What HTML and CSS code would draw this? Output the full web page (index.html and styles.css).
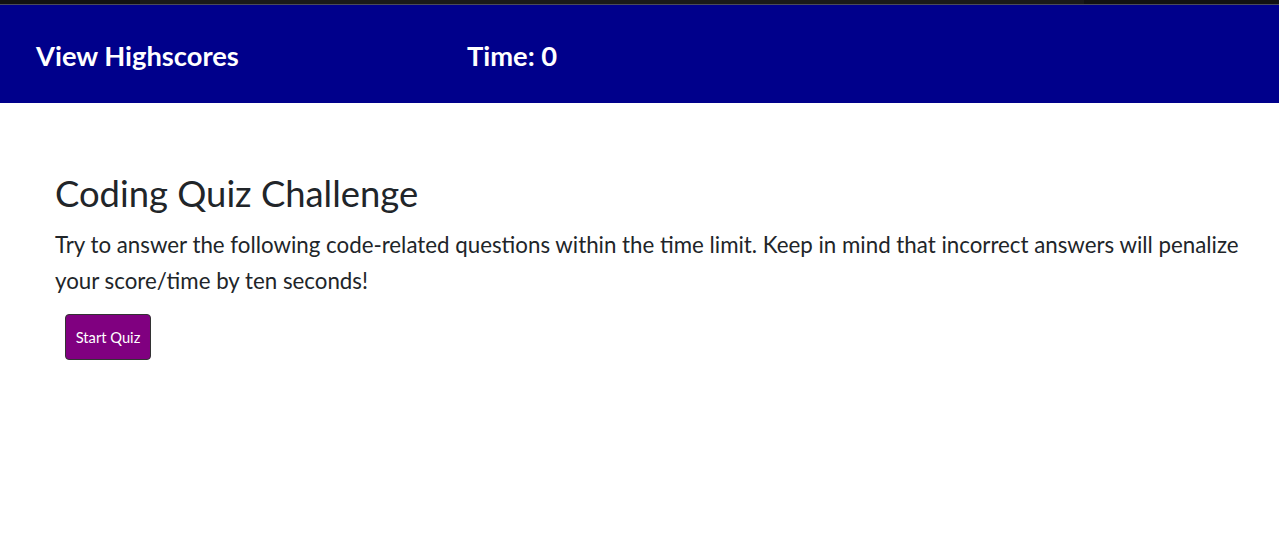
FILE: index.html
```html
<!DOCTYPE html>
<html lang="en">
<head>
<meta charset="utf-8">
<title>Coding Quiz Challenge</title>
<link rel="stylesheet" href="styles.css">
</head>
<body>
<div class="chrome"><div class="chrome-tab"></div></div>
<header class="topbar">
  <a class="highscores" href="#">View Highscores</a>
  <span class="timer">Time: 0</span>
</header>
<main class="intro">
  <h1 class="title">Coding Quiz Challenge</h1>
  <p class="lead">Try to answer the following code-related questions within the time limit. Keep in mind that incorrect answers will penalize your score/time by ten seconds!</p>
  <button class="start-btn" type="button">Start Quiz</button>
</main>
</body>
</html>
```

FILE: styles.css
```css
html, body {
  margin: 0;
  padding: 0;
  background: #ffffff;
}
body {
  font-family: "Lato", "Liberation Sans", sans-serif;
  color: #212529;
}
.chrome {
  height: 4px;
  background: #121212;
  border-bottom: 1px solid #4a4a5a;
  padding: 0 195px 0 140px;
}
.chrome-tab {
  height: 4px;
  background: #1a1a1a;
}
.topbar {
  height: 98px;
  background: #00008b;
  display: grid;
  grid-template-columns: 431px auto;
  align-items: center;
  padding: 2px 0 0 36px;
  box-sizing: border-box;
}
.highscores, .timer {
  color: #ffffff;
  font-weight: 700;
  font-size: 27.3px;
  text-decoration: none;
}
.intro {
  padding: 68px 30px 0 55px;
}
.title {
  margin: 0;
  font-weight: 400;
  font-size: 36.4px;
  line-height: 44px;
}
.lead {
  margin: 12px 0 15px;
  font-size: 22.3px;
  line-height: 36px;
}
.start-btn {
  margin-left: 10px;
  width: 86px;
  height: 46px;
  background: #800080;
  color: #ffffff;
  border: 1px solid #333333;
  border-radius: 4px;
  font-family: "Lato", "Liberation Sans", sans-serif;
  font-size: 14.7px;
  padding: 0;
}
```
